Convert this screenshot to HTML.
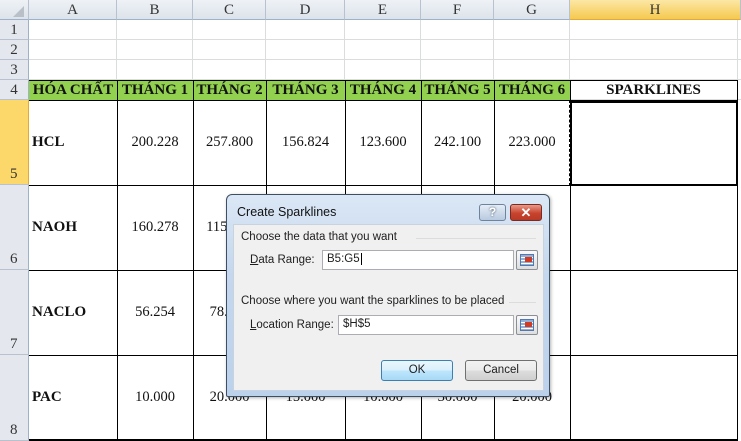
<!DOCTYPE html>
<html><head><meta charset="utf-8"><style>
*{margin:0;padding:0;box-sizing:border-box}
body{width:741px;height:441px;overflow:hidden;background:#fff;position:relative;font-family:"Liberation Serif",serif}
.a{position:absolute}
.ch{position:absolute;top:0;height:20px;background:linear-gradient(#eef2f7,#dde3ea);border-right:1px solid #b8c2cf;border-bottom:1px solid #9eb1c8;text-align:center;font-size:15px;line-height:20px;color:#333}
.rh{position:absolute;left:0;width:29px;background:#e4e8ee;border-bottom:1px solid #b8c2cf;border-right:1px solid #9eb1c8;font-size:15px;color:#333;text-align:center}
.c{position:absolute;font-size:14.5px;color:#111;display:flex;align-items:center;justify-content:center}
.b{font-weight:bold}
.h{font-size:15px}
.dlg{font-family:"Liberation Sans",sans-serif;font-size:11.5px;color:#1e1e1e}
</style></head><body>
<div class="a" style="left:29px;top:20px;width:712px;height:80px;background:
repeating-linear-gradient(to bottom,transparent 0 19px,#dadcdd 19px 20px)"></div>
<div class="a" style="left:116px;top:20px;width:1px;height:60px;background:#dadcdd"></div>
<div class="a" style="left:192px;top:20px;width:1px;height:60px;background:#dadcdd"></div>
<div class="a" style="left:265px;top:20px;width:1px;height:60px;background:#dadcdd"></div>
<div class="a" style="left:344px;top:20px;width:1px;height:60px;background:#dadcdd"></div>
<div class="a" style="left:420px;top:20px;width:1px;height:60px;background:#dadcdd"></div>
<div class="a" style="left:493px;top:20px;width:1px;height:60px;background:#dadcdd"></div>
<div class="a" style="left:569px;top:20px;width:1px;height:60px;background:#dadcdd"></div>
<div class="a" style="left:737px;top:20px;width:1px;height:420px;background:#dadcdd"></div>

<div class="ch" style="left:0;width:29px;"><div class="a" style="left:13px;top:6px;width:0;height:0;border-left:11px solid transparent;border-bottom:11px solid #b9c0c8"></div></div>
<div class="ch" style="left:29px;width:88px">A</div>
<div class="ch" style="left:117px;width:76px">B</div>
<div class="ch" style="left:193px;width:73px">C</div>
<div class="ch" style="left:266px;width:79px">D</div>
<div class="ch" style="left:345px;width:76px">E</div>
<div class="ch" style="left:421px;width:73px">F</div>
<div class="ch" style="left:494px;width:76px">G</div>
<div class="ch" style="left:570px;width:171px;background:linear-gradient(#fbe7a5,#f5c94f);border-bottom:1px solid #e2a93b">H</div>

<div class="rh" style="top:20px;height:20px;line-height:20px">1</div>
<div class="rh" style="top:40px;height:20px;line-height:20px">2</div>
<div class="rh" style="top:60px;height:20px;line-height:20px">3</div>
<div class="rh" style="top:80px;height:20px;line-height:20px">4</div>
<div class="rh" style="top:100px;height:85px;background:#fcd76a;border-right:1px solid #e2a93b"><span class="a" style="left:10px;bottom:1px">5</span></div>
<div class="rh" style="top:185px;height:85px"><span class="a" style="left:10px;bottom:1px">6</span></div>
<div class="rh" style="top:270px;height:85px"><span class="a" style="left:10px;bottom:1px">7</span></div>
<div class="rh" style="top:355px;height:86px"><span class="a" style="left:10px;bottom:1px">8</span></div>

<div class="a" style="left:29px;top:80px;width:541px;height:21px;background:#92d050"></div>
<div class="c b h" style="left:29px;top:80px;width:88px;height:21px">HÓA CHẤT</div>
<div class="c b h" style="left:117px;top:80px;width:76px;height:21px">THÁNG 1</div>
<div class="c b h" style="left:193px;top:80px;width:73px;height:21px">THÁNG 2</div>
<div class="c b h" style="left:266px;top:80px;width:79px;height:21px">THÁNG 3</div>
<div class="c b h" style="left:345px;top:80px;width:76px;height:21px">THÁNG 4</div>
<div class="c b h" style="left:421px;top:80px;width:73px;height:21px">THÁNG 5</div>
<div class="c b h" style="left:494px;top:80px;width:76px;height:21px">THÁNG 6</div>
<div class="c b h" style="left:570px;top:80px;width:167px;height:21px">SPARKLINES</div>

<div class="a" style="left:29px;top:80px;width:709px;height:1px;background:#000"></div>
<div class="a" style="left:29px;top:100px;width:709px;height:1px;background:#000"></div>
<div class="a" style="left:29px;top:185px;width:709px;height:1px;background:#000"></div>
<div class="a" style="left:29px;top:270px;width:709px;height:1px;background:#000"></div>
<div class="a" style="left:29px;top:355px;width:709px;height:1px;background:#000"></div>
<div class="a" style="left:29px;top:439px;width:709px;height:2px;background:#000"></div>
<div class="a" style="left:117px;top:80px;width:1px;height:361px;background:#000"></div>
<div class="a" style="left:193px;top:80px;width:1px;height:361px;background:#000"></div>
<div class="a" style="left:266px;top:80px;width:1px;height:361px;background:#000"></div>
<div class="a" style="left:345px;top:80px;width:1px;height:361px;background:#000"></div>
<div class="a" style="left:421px;top:80px;width:1px;height:361px;background:#000"></div>
<div class="a" style="left:494px;top:80px;width:1px;height:361px;background:#000"></div>
<div class="a" style="left:570px;top:80px;width:1px;height:361px;background:#000"></div>
<div class="a" style="left:737px;top:80px;width:1px;height:361px;background:#000"></div>
<div class="a" style="left:117px;top:100px;width:453px;height:86px;border:1px dashed #000;background:transparent"></div>
<div class="a" style="left:570px;top:101px;width:168px;height:85px;border:2px solid #000;outline:1px dashed #fff;outline-offset:-3px"></div>

<div class="c b h" style="left:32px;top:100px;height:85px">HCL</div>
<div class="c" style="left:117px;top:100px;width:76px;height:85px">200.228</div>
<div class="c" style="left:193px;top:100px;width:73px;height:85px">257.800</div>
<div class="c" style="left:266px;top:100px;width:79px;height:85px">156.824</div>
<div class="c" style="left:345px;top:100px;width:76px;height:85px">123.600</div>
<div class="c" style="left:421px;top:100px;width:73px;height:85px">242.100</div>
<div class="c" style="left:494px;top:100px;width:76px;height:85px">223.000</div>

<div class="c b h" style="left:32px;top:185px;height:85px">NAOH</div>
<div class="c" style="left:117px;top:185px;width:76px;height:85px">160.278</div>
<div class="c" style="left:193px;top:185px;width:73px;height:85px">115.000</div>
<div class="c b h" style="left:32px;top:270px;height:85px">NACLO</div>
<div class="c" style="left:117px;top:270px;width:76px;height:85px">56.254</div>
<div class="c" style="left:193px;top:270px;width:73px;height:85px">78.000</div>
<div class="c b h" style="left:32px;top:355px;height:85px">PAC</div>
<div class="c" style="left:117px;top:355px;width:76px;height:85px">10.000</div>
<div class="c" style="left:193px;top:355px;width:73px;height:85px">20.000</div>
<div class="c" style="left:266px;top:355px;width:79px;height:85px">15.000</div>
<div class="c" style="left:345px;top:355px;width:76px;height:85px">10.000</div>
<div class="c" style="left:421px;top:355px;width:73px;height:85px">30.000</div>
<div class="c" style="left:494px;top:355px;width:76px;height:85px">20.000</div>

<div class="a dlg" style="left:226px;top:194px;width:324px;height:203px;border:1px solid #3e4f63;border-radius:6px 6px 2px 2px;background:linear-gradient(#dbe7f5,#c4d7ee 40%,#bcd1ec);box-shadow:1px 1px 3px rgba(0,0,0,.3)">
 <div class="a" style="left:10px;top:10px;font-size:12.5px;color:#111">Create Sparklines</div>
 <div class="a" style="left:252px;top:9px;width:27px;height:17px;border:1px solid #6f839c;border-radius:3px;background:linear-gradient(#e4ecf6,#b9cae0);text-align:center;font:bold 12px 'Liberation Sans',sans-serif;color:#fff;text-shadow:0 0 2px #345;line-height:15px">?</div>
 <div class="a" style="left:283px;top:9px;width:32px;height:17px;border:1px solid #7a2a20;border-radius:3px;background:linear-gradient(#e99a8a,#c8432d 55%,#b73a26);text-align:center;font:bold 13px 'Liberation Sans',sans-serif;color:#fff;line-height:15px">✕</div>
 <div class="a" style="left:6px;top:29px;width:311px;height:167px;background:#f0f0f0;border:1px solid #c9d3df">
  <div class="a" style="left:7px;top:6px">Choose the data that you want</div>
  <div class="a" style="left:182px;top:13px;width:120px;height:1px;background:#dcdcdc"></div>
  <div class="a" style="left:16px;top:29px"><u>D</u>ata Range:</div>
  <div class="a" style="left:88px;top:25px;width:192px;height:20px;background:#fff;border:1px solid #abadb3;padding:2px 4px">B5:G5<span style="border-left:1px solid #000;margin-left:1px"></span></div>
  <div class="a" style="left:282px;top:25px;width:22px;height:20px;border:1px solid #8a8f96;border-radius:2px;background:linear-gradient(#fafafa,#dedede)">
   <div class="a" style="left:3px;top:3px;width:14px;height:12px;background:repeating-linear-gradient(#8fb0da 0 2px,#fff 2px 3px);border:1px solid #5577aa"></div>
   <div class="a" style="left:8px;top:6px;width:7px;height:5px;background:#d23a22"></div></div>
  <div class="a" style="left:7px;top:70px">Choose where you want the sparklines to be placed</div>
  <div class="a" style="left:275px;top:77px;width:27px;height:1px;background:#dcdcdc"></div>
  <div class="a" style="left:16px;top:94px"><u>L</u>ocation Range:</div>
  <div class="a" style="left:104px;top:90px;width:176px;height:20px;background:#fff;border:1px solid #abadb3;padding:2px 4px">$H$5</div>
  <div class="a" style="left:282px;top:90px;width:22px;height:20px;border:1px solid #8a8f96;border-radius:2px;background:linear-gradient(#fafafa,#dedede)">
   <div class="a" style="left:3px;top:3px;width:14px;height:12px;background:repeating-linear-gradient(#8fb0da 0 2px,#fff 2px 3px);border:1px solid #5577aa"></div>
   <div class="a" style="left:8px;top:6px;width:7px;height:5px;background:#d23a22"></div></div>
  <div class="a" style="left:147px;top:135px;width:72px;height:21px;border:1px solid #3c7fb1;border-radius:3px;background:linear-gradient(#eaf6fd,#d9f0fc 50%,#bee6fd 51%,#a7d9f5);text-align:center;line-height:19px">OK</div>
  <div class="a" style="left:231px;top:135px;width:72px;height:21px;border:1px solid #707070;border-radius:3px;background:linear-gradient(#f2f2f2,#ebebeb 50%,#dddddd 51%,#cfcfcf);text-align:center;line-height:19px">Cancel</div>
 </div>
</div>
</body></html>
